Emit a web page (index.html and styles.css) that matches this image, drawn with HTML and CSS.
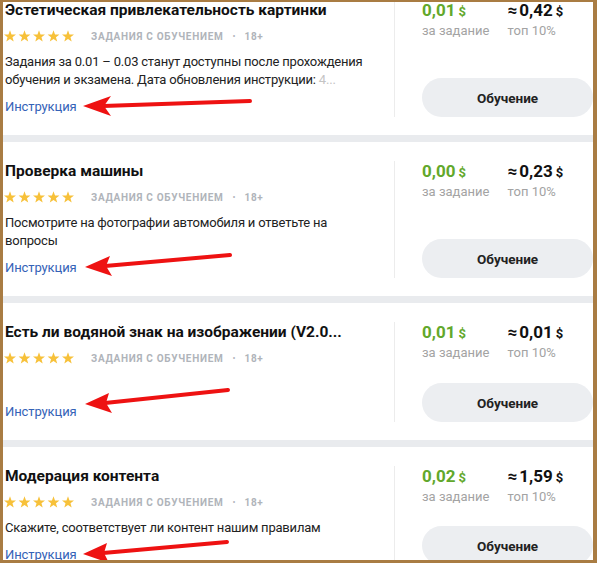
FILE: index.html
```html
<html lang="ru">

<head>
    <meta charset="UTF-8">
    <meta name="viewport" content="width=device-width, initial-scale=1.0">
    <title>Задания</title>

    <link rel="stylesheet" href="styles.css">
</head>

<body>
    <svg class="defs" width="0" height="0">
        <symbol id="star" viewBox="0 0 12 12">
            <path d="M6 .2 7.53 4.4 12 4.55 8.47 7.3 9.7 11.6 6 9.1 2.3 11.6 3.53 7.3 0 4.55 4.47 4.4Z" />
        </symbol>
    </svg>

    <div class="frame">
        <div class="list">
            <div class="task">
                <div class="info">
                    <div class="title">Эстетическая привлекательность картинки</div>
                    <div class="meta">
                        <svg class="stars" width="70" height="12">
                            <use href="#star" x="0" width="12" height="12" />
                            <use href="#star" x="14.5" width="12" height="12" />
                            <use href="#star" x="29" width="12" height="12" />
                            <use href="#star" x="43.5" width="12" height="12" />
                            <use href="#star" x="58" width="12" height="12" />
                        </svg>
                        <span class="tag">Задания с обучением</span>
                        <span class="dot">•</span>
                        <span class="tag">18+</span>
                    </div>
                    <p class="desc">Задания за 0.01 – 0.03 станут доступны после прохождения обучения и экзамена. Дата обновления инструкции:<span class="fade"> 4...</span></p>
                    <a class="link" href="#">Инструкция</a>
                </div>
                <div class="side">
                    <div class="prices">
                        <div class="price">
                            <div class="sum green">0,01<small>$</small></div>
                            <div class="label">за задание</div>
                        </div>
                        <div class="price">
                            <div class="sum">≈<span class="num">0,42</span><small>$</small></div>
                            <div class="label">топ 10%</div>
                        </div>
                    </div>
                    <button type="button" class="btn">Обучение</button>
                </div>
            </div>

            <div class="task">
                <div class="info">
                    <div class="title">Проверка машины</div>
                    <div class="meta">
                        <svg class="stars" width="70" height="12">
                            <use href="#star" x="0" width="12" height="12" />
                            <use href="#star" x="14.5" width="12" height="12" />
                            <use href="#star" x="29" width="12" height="12" />
                            <use href="#star" x="43.5" width="12" height="12" />
                            <use href="#star" x="58" width="12" height="12" />
                        </svg>
                        <span class="tag">Задания с обучением</span>
                        <span class="dot">•</span>
                        <span class="tag">18+</span>
                    </div>
                    <p class="desc">Посмотрите на фотографии автомобиля и ответьте на вопросы</p>
                    <a class="link" href="#">Инструкция</a>
                </div>
                <div class="side">
                    <div class="prices">
                        <div class="price">
                            <div class="sum green">0,00<small>$</small></div>
                            <div class="label">за задание</div>
                        </div>
                        <div class="price">
                            <div class="sum">≈<span class="num">0,23</span><small>$</small></div>
                            <div class="label">топ 10%</div>
                        </div>
                    </div>
                    <button type="button" class="btn">Обучение</button>
                </div>
            </div>

            <div class="task">
                <div class="info">
                    <div class="title">Есть ли водяной знак на изображении (V2.0...</div>
                    <div class="meta">
                        <svg class="stars" width="70" height="12">
                            <use href="#star" x="0" width="12" height="12" />
                            <use href="#star" x="14.5" width="12" height="12" />
                            <use href="#star" x="29" width="12" height="12" />
                            <use href="#star" x="43.5" width="12" height="12" />
                            <use href="#star" x="58" width="12" height="12" />
                        </svg>
                        <span class="tag">Задания с обучением</span>
                        <span class="dot">•</span>
                        <span class="tag">18+</span>
                    </div>
                    <a class="link" href="#">Инструкция</a>
                </div>
                <div class="side">
                    <div class="prices">
                        <div class="price">
                            <div class="sum green">0,01<small>$</small></div>
                            <div class="label">за задание</div>
                        </div>
                        <div class="price">
                            <div class="sum">≈<span class="num">0,01</span><small>$</small></div>
                            <div class="label">топ 10%</div>
                        </div>
                    </div>
                    <button type="button" class="btn">Обучение</button>
                </div>
            </div>

            <div class="task">
                <div class="info">
                    <div class="title">Модерация контента</div>
                    <div class="meta">
                        <svg class="stars" width="70" height="12">
                            <use href="#star" x="0" width="12" height="12" />
                            <use href="#star" x="14.5" width="12" height="12" />
                            <use href="#star" x="29" width="12" height="12" />
                            <use href="#star" x="43.5" width="12" height="12" />
                            <use href="#star" x="58" width="12" height="12" />
                        </svg>
                        <span class="tag">Задания с обучением</span>
                        <span class="dot">•</span>
                        <span class="tag">18+</span>
                    </div>
                    <p class="desc">Скажите, соответствует ли контент нашим правилам</p>
                    <a class="link" href="#">Инструкция</a>
                </div>
                <div class="side">
                    <div class="prices">
                        <div class="price">
                            <div class="sum green">0,02<small>$</small></div>
                            <div class="label">за задание</div>
                        </div>
                        <div class="price">
                            <div class="sum">≈<span class="num">1,59</span><small>$</small></div>
                            <div class="label">топ 10%</div>
                        </div>
                    </div>
                    <button type="button" class="btn">Обучение</button>
                </div>
            </div>
        </div>

        <!-- red arrows drawn over the screenshot -->
        <svg class="arrows" width="597" height="563">
            <line x1="250" y1="101" x2="103" y2="106" />
            <polygon points="83,106 111,96 104,106 111,116" />
            <line x1="230" y1="255" x2="105" y2="266" />
            <polygon points="85,267 110,256 106,266 112,276" />
            <line x1="228" y1="390" x2="105" y2="403" />
            <polygon points="85,404 109,393 106,403 112,413" />
            <line x1="227" y1="542" x2="103" y2="553" />
            <polygon points="83,554 107,543 104,553 109,563" />
        </svg>
    </div>
</body>

</html>
```

FILE: styles.css
```css
* {
    box-sizing: border-box;
    margin: 0;
    padding: 0;
}

html,
body {
    height: 100%;
}

body {
    font-family: Roboto, "Liberation Sans", sans-serif;
    color: #222;
    background: #fff;
}

.defs {
    position: absolute;
}

.frame {
    position: relative;
    width: 597px;
    height: 563px;
    border: 3px solid #a97c43;
    border-top-width: 2px;
    border-right-width: 4px;
    overflow: hidden;
}

.list {
    margin-top: -2px;
}

.task {
    display: flex;
    padding: 19px 0 18px 2px;
    border-bottom: 7px solid #e9ebee;
}

.task:first-child {
    padding-top: 0;
}

.info {
    flex: 1;
    min-width: 0;
    padding-right: 28px;
    display: flex;
    flex-direction: column;
}

.title {
    font-size: 15.5px;
    font-weight: 700;
    line-height: 21px;
    color: #111;
    white-space: nowrap;
    overflow: hidden;
    text-overflow: ellipsis;
}

.meta {
    display: flex;
    align-items: center;
    height: 20px;
    margin-top: 5px;
}

.stars {
    flex-shrink: 0;
    fill: #f7c13a;
    margin-left: -1px;
}

.tag {
    font-size: 10px;
    font-weight: 700;
    letter-spacing: 0.7px;
    text-transform: uppercase;
    color: #b0b4ba;
}

.stars + .tag {
    margin-left: 17px;
}

.dot {
    font-size: 9px;
    color: #b0b4ba;
    margin: 0 9px;
}

.desc {
    font-size: 13px;
    letter-spacing: -0.2px;
    line-height: 18px;
    margin-top: 7px;
    max-height: 36px;
    overflow: hidden;
}

.fade {
    color: #c4c4c4;
}

.link {
    margin-top: auto;
    padding-top: 8px;
    font-size: 13px;
    letter-spacing: -0.1px;
    line-height: 20px;
    color: #3462b7;
    text-decoration: none;
}

.side {
    width: 199px;
    flex-shrink: 0;
    border-left: 1px solid #ececec;
    padding-left: 27px;
    display: flex;
    flex-direction: column;
}

.prices {
    display: flex;
}

.price {
    width: 88px;
}

.sum {
    font-size: 17px;
    font-weight: 700;
    line-height: 20px;
    color: #111;
}

.sum small {
    font-size: 13px;
    margin-left: 3px;
}

.sum .num {
    margin-left: 2px;
}

.green {
    color: #62a82b;
}

.label {
    font-size: 13px;
    line-height: 18px;
    color: #a3a3a3;
}

.btn {
    margin-top: auto;
    width: 171px;
    height: 39px;
    border: none;
    border-radius: 20px;
    background: #eceef1;
    font-family: inherit;
    font-size: 13.5px;
    font-weight: 700;
    color: #222;
}

.task:nth-child(3) .btn {
    margin-top: 21px;
}

.arrows {
    position: absolute;
    left: -3px;
    top: -2px;
    pointer-events: none;
}

.arrows line {
    stroke: #ee1212;
    stroke-width: 4;
    stroke-linecap: round;
}

.arrows polygon {
    fill: #ee1212;
}
```
